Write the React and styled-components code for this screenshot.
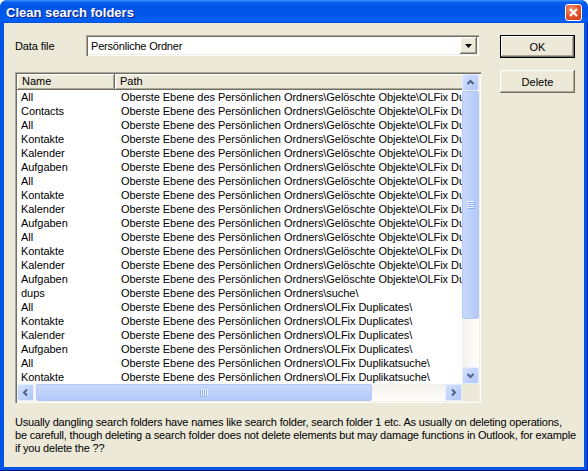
import React from "react";
import styled, { createGlobalStyle } from "styled-components";

const GlobalStyle = createGlobalStyle`
  html, body {
    margin: 0;
    padding: 0;
    background: #ffffff;
    overflow: hidden;
  }
  body {
    font-family: "Liberation Sans", Arial, sans-serif;
    font-size: 11px;
    color: #000;
  }
`;

const rows = [
  ["All", "Gelöschte Objekte\\OLFix Duplicates\\"],
  ["Contacts", "Gelöschte Objekte\\OLFix Duplicates\\"],
  ["All", "Gelöschte Objekte\\OLFix Duplicates\\"],
  ["Kontakte", "Gelöschte Objekte\\OLFix Duplicates\\"],
  ["Kalender", "Gelöschte Objekte\\OLFix Duplicates\\"],
  ["Aufgaben", "Gelöschte Objekte\\OLFix Duplicates\\"],
  ["All", "Gelöschte Objekte\\OLFix Duplicates\\"],
  ["Kontakte", "Gelöschte Objekte\\OLFix Duplicates\\"],
  ["Kalender", "Gelöschte Objekte\\OLFix Duplicates\\"],
  ["Aufgaben", "Gelöschte Objekte\\OLFix Duplicates\\"],
  ["All", "Gelöschte Objekte\\OLFix Duplicates\\"],
  ["Kontakte", "Gelöschte Objekte\\OLFix Duplicates\\"],
  ["Kalender", "Gelöschte Objekte\\OLFix Duplicates\\"],
  ["Aufgaben", "Gelöschte Objekte\\OLFix Duplicates\\"],
  ["dups", "suche\\"],
  ["All", "OLFix Duplicates\\"],
  ["Kontakte", "OLFix Duplicates\\"],
  ["Kalender", "OLFix Duplicates\\"],
  ["Aufgaben", "OLFix Duplicates\\"],
  ["All", "OLFix Duplikatsuche\\"],
  ["Kontakte", "OLFix Duplikatsuche\\"],
];

const ROOT = "Oberste Ebene des Persönlichen Ordners\\";

const Window = styled.div`
  width: 588px;
  height: 471px;
  display: flex;
  flex-direction: column;
  background: #0055e5;
  border-radius: 7px 7px 0 0;
  overflow: hidden;
`;

const TitleBar = styled.div`
  height: 23px;
  flex: none;
  display: flex;
  align-items: center;
  justify-content: space-between;
  padding: 0 6px 0 6px;
  background: linear-gradient(
    to bottom,
    #3d95ff 0%,
    #0a5ff0 10%,
    #0055e5 30%,
    #0058ea 70%,
    #0061f5 90%,
    #0050dc 100%
  );
`;

const Title = styled.span`
  color: #fff;
  font-weight: bold;
  font-size: 13px;
  text-shadow: 1px 1px 0 #0a1e8a;
  padding-top: 1px;
`;

const CloseButton = styled.div`
  width: 15px;
  height: 15px;
  border: 1px solid #ffffff;
  border-radius: 3px;
  background: radial-gradient(circle at 35% 30%, #f39a7a 0%, #e2542f 50%, #c73a15 100%);
  display: flex;
  align-items: center;
  justify-content: center;
  margin-top: 1px;
`;

const Frame = styled.div`
  flex: 1;
  display: flex;
  padding: 0 4px 4px 4px;
  box-shadow: inset 0 -1px 0 #00138c, inset -1px 0 0 #001ea0;
`;

const Body = styled.div`
  flex: 1;
  display: flex;
  gap: 19px;
  padding: 12px 0 0 11px;
  background: #ece9d8;
`;

const MainColumn = styled.div`
  width: 466px;
  display: flex;
  flex-direction: column;
`;

const DataRow = styled.div`
  display: flex;
  align-items: center;
  height: 21px;
`;

const Label = styled.span`
  width: 71px;
  letter-spacing: -0.1px;
`;

const sunken = `
  box-shadow: inset 1px 1px 0 #aca899, inset 2px 2px 0 #716f64,
    inset -1px -1px 0 #ffffff, inset -2px -2px 0 #f1efe2;
`;

const raised = `
  box-shadow: inset -1px -1px 0 #716f64, inset 1px 1px 0 #ffffff,
    inset -2px -2px 0 #aca899, inset 2px 2px 0 #f1efe2;
`;

const Combo = styled.div`
  width: 393px;
  height: 21px;
  box-sizing: border-box;
  padding: 2px;
  display: flex;
  background: #fff;
  ${sunken}
`;

const ComboText = styled.span`
  flex: 1;
  display: flex;
  align-items: center;
  padding-left: 3px;
  letter-spacing: -0.2px;
`;

const ComboButton = styled.div`
  width: 17px;
  height: 17px;
  box-sizing: border-box;
  background: #ece9d8;
  display: flex;
  align-items: center;
  justify-content: center;
  ${raised}
`;

const ListView = styled.div`
  margin-top: 16px;
  height: 331px;
  box-sizing: border-box;
  padding: 2px;
  background: #fff;
  display: grid;
  grid-template-columns: 1fr 17px;
  grid-template-rows: 1fr 17px;
  ${sunken}
`;

const ListContent = styled.div`
  overflow: hidden;
  white-space: nowrap;
`;

const Header = styled.div`
  display: flex;
  height: 16px;
`;

const HeaderCell = styled.div`
  width: ${(p) => p.$width}px;
  flex: none;
  box-sizing: border-box;
  padding-left: 5px;
  line-height: 15px;
  background: #ece9d8;
  ${raised}
`;

const Row = styled.div`
  display: flex;
  height: 14px;
  line-height: 14px;
`;

const Cell = styled.div`
  width: ${(p) => p.$width}px;
  flex: none;
  padding-left: ${(p) => p.$pad}px;
  box-sizing: border-box;
  letter-spacing: -0.05px;
`;

const VScroll = styled.div`
  display: flex;
  flex-direction: column;
  background: linear-gradient(to right, #f3f1ec, #fefefb);
`;

const HScroll = styled.div`
  display: flex;
  background: linear-gradient(to bottom, #f3f1ec, #fefefb);
`;

const Corner = styled.div`
  background: #ece9d8;
`;

const ArrowButton = styled.div`
  width: 17px;
  height: 17px;
  flex: none;
  box-sizing: border-box;
  border: 1px solid #e6edfd;
  border-radius: 2px;
  background: linear-gradient(135deg, #d4e0fd 0%, #c2d4fc 50%, #aec5f7 100%);
  display: flex;
  align-items: center;
  justify-content: center;
`;

const Thumb = styled.div`
  flex: none;
  box-sizing: border-box;
  border: 1px solid #b3c8f6;
  border-radius: 2px;
  background: ${(p) =>
    p.$vertical
      ? "linear-gradient(to right, #cad9fd, #bcd0fb 60%, #b2c8f8)"
      : "linear-gradient(to bottom, #cad9fd, #bcd0fb 60%, #b2c8f8)"};
  display: flex;
  align-items: center;
  justify-content: center;
  ${(p) =>
    p.$vertical
      ? `height: ${p.$size}px;`
      : `width: ${p.$size}px; margin-left: 2px;`}
`;

const Track = styled.div`
  flex: 1;
`;

const Footer = styled.p`
  margin: 13px 0 0 0;
  line-height: 13px;
  white-space: nowrap;
  letter-spacing: -0.18px;
`;

const ButtonColumn = styled.div`
  width: 75px;
  display: flex;
  flex-direction: column;
  gap: 12px;
`;

const DialogButton = styled.div`
  height: 23px;
  box-sizing: border-box;
  display: flex;
  align-items: center;
  justify-content: center;
  background: #ece9d8;
  ${(p) =>
    p.$default
      ? `border: 1px solid #000;
         box-shadow: inset -1px -1px 0 #716f64, inset 1px 1px 0 #ffffff,
           inset -2px -2px 0 #aca899;`
      : `box-shadow: inset -1px -1px 0 #716f64, inset 1px 1px 0 #ffffff,
           inset -2px -2px 0 #aca899, inset 2px 2px 0 #f1efe2;`}
`;

const Chevron = ({ dir }) => {
  const rot = { up: 0, down: 180, left: 270, right: 90 }[dir];
  return (
    <svg width="9" height="9" viewBox="0 0 9 9" style={{ transform: `rotate(${rot}deg)` }}>
      <polyline points="1.5,6 4.5,3 7.5,6" fill="none" stroke="#4d6185" strokeWidth="2" />
    </svg>
  );
};

const Grip = ({ vertical }) => (
  <svg width="8" height="8" viewBox="0 0 8 8" style={{ transform: vertical ? "none" : "rotate(90deg)" }}>
    {[0, 2, 4, 6].map((y) => (
      <g key={y}>
        <rect x="0" y={y} width="7" height="1" fill="#eef4fe" />
        <rect x="1" y={y + 1} width="7" height="1" fill="#8cb0f8" />
      </g>
    ))}
  </svg>
);

export default function App() {
  return (
    <>
      <GlobalStyle />
      <Window>
        <TitleBar>
          <Title>Clean search folders</Title>
          <CloseButton>
            <svg width="9" height="9" viewBox="0 0 9 9">
              <path d="M1 1 L8 8 M8 1 L1 8" stroke="#fff" strokeWidth="2" />
            </svg>
          </CloseButton>
        </TitleBar>
        <Frame>
          <Body>
            <MainColumn>
              <DataRow>
                <Label>Data file</Label>
                <Combo>
                  <ComboText>Persönliche Ordner</ComboText>
                  <ComboButton>
                    <svg width="7" height="4" viewBox="0 0 7 4">
                      <path d="M0 0 H7 L3.5 4 Z" fill="#000" />
                    </svg>
                  </ComboButton>
                </Combo>
              </DataRow>
              <ListView>
                <ListContent>
                  <Header>
                    <HeaderCell $width={98}>Name</HeaderCell>
                    <HeaderCell $width={420}>Path</HeaderCell>
                  </Header>
                  {rows.map(([name, path], i) => (
                    <Row key={i}>
                      <Cell $width={98} $pad={4}>{name}</Cell>
                      <Cell $width={420} $pad={6}>{ROOT + path}</Cell>
                    </Row>
                  ))}
                </ListContent>
                <VScroll>
                  <ArrowButton><Chevron dir="up" /></ArrowButton>
                  <Thumb $vertical $size={228}><Grip vertical /></Thumb>
                  <Track />
                  <ArrowButton><Chevron dir="down" /></ArrowButton>
                </VScroll>
                <HScroll>
                  <ArrowButton><Chevron dir="left" /></ArrowButton>
                  <Thumb $size={336}><Grip /></Thumb>
                  <Track />
                  <ArrowButton><Chevron dir="right" /></ArrowButton>
                </HScroll>
                <Corner />
              </ListView>
              <Footer>
                Usually dangling search folders have names like search folder, search folder 1 etc. As usually on deleting operations,
                <br />
                be carefull, though deleting a search folder does not delete elements but may damage functions in Outlook, for example
                <br />
                if you delete the ??
              </Footer>
            </MainColumn>
            <ButtonColumn>
              <DialogButton $default>OK</DialogButton>
              <DialogButton>Delete</DialogButton>
            </ButtonColumn>
          </Body>
        </Frame>
      </Window>
    </>
  );
}
